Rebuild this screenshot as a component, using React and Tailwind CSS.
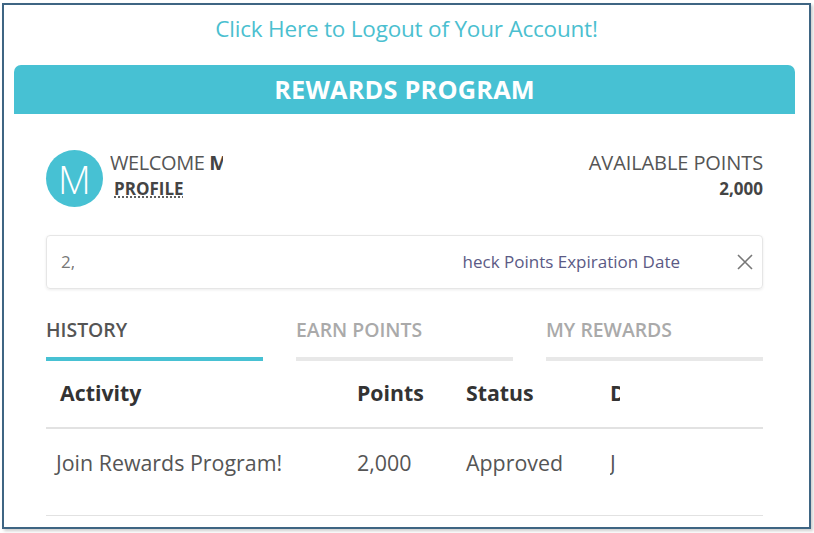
import React from 'react';

const TABS = [
  { label: 'HISTORY', active: true },
  { label: 'EARN POINTS', active: false },
  { label: 'MY REWARDS', active: false },
];

export default function App() {
  return (
    <div className="w-[814px] h-[533px] bg-white pl-[2px] pt-[3px] font-['Open_Sans',sans-serif] overflow-hidden">
      <div className="w-[809px] h-[526px] border-2 border-[#3e6583] bg-white shadow-[2px_2px_3px_rgba(0,0,0,0.2)] overflow-hidden">
        {/* Logout link */}
        <div className="pt-[9px] text-center">
          <a className="text-[22.5px] leading-[30px] text-[#4bbfd0] tracking-[-0.2px]">Click Here to Logout of Your Account!</a>
        </div>

        {/* Header bar */}
        <div className="mt-[21px] ml-[10px] w-[781px] h-[49px] bg-[#47c1d3] rounded-t-[7px] flex items-center justify-center">
          <h1 className="text-white font-bold text-[25.3px] tracking-[0.2px]">REWARDS PROGRAM</h1>
        </div>

        <div className="ml-[42px] w-[717px]">
          {/* Welcome + points */}
          <div className="mt-[36px] flex items-start justify-between">
            <div className="flex items-start">
              <div className="w-[57px] h-[57px] rounded-full bg-[#47c1d3] flex items-center justify-center text-white text-[38px] font-light leading-none">M</div>
              <div className="ml-[7px]">
                <div className="w-[113px] overflow-hidden whitespace-nowrap text-[20px] leading-[26px] text-[#555] tracking-[-0.4px]">
                  WELCOME <span className="font-bold text-[#444]">MEMBER</span>
                </div>
                <a className="ml-[4px] mt-[1px] block text-[17px] leading-[24px] font-bold text-[#444] underline decoration-dotted underline-offset-2">PROFILE</a>
              </div>
            </div>
            <div className="text-right">
              <div className="text-[20px] leading-[26px] text-[#555] tracking-[-0.1px]">AVAILABLE POINTS</div>
              <div className="mt-[1px] text-[17px] leading-[24px] font-bold text-[#444]">2,000</div>
            </div>
          </div>

          {/* Expiration box */}
          <div className="mt-[28px] h-[54px] border border-[#e6e6e6] rounded-[4px] shadow-[0_1px_3px_rgba(0,0,0,0.08)] flex items-center pl-[14px] pr-[7px]">
            <div className="w-[13px] overflow-hidden whitespace-nowrap text-[17px] text-[#777]">2,000 Points</div>
            <div className="flex-1 flex justify-end">
              <div className="w-[218px] overflow-hidden whitespace-nowrap flex justify-end text-[17px] text-[#5b5a85]">Check Points Expiration Date</div>
            </div>
            <button className="ml-[55px] w-[20px] h-[20px] flex items-center justify-center text-[#777]">
              <svg width="18" height="18" viewBox="0 0 18 18" fill="none" stroke="currentColor" strokeWidth="1.6">
                <path d="M2 2 L16 16 M16 2 L2 16" />
              </svg>
            </button>
          </div>

          {/* Tabs */}
          <div className="mt-[28px] flex gap-[33px]">
            {TABS.map(tab => (
              <div key={tab.label} className="w-[217px]">
                <div className={`text-[19.4px] leading-[26px] font-semibold ${tab.active ? 'text-[#555]' : 'text-[#aaa]'}`}>{tab.label}</div>
                <div className={`mt-[14px] h-[4px] ${tab.active ? 'bg-[#47c1d3]' : 'bg-[#e8e8e8]'}`} />
              </div>
            ))}
          </div>

          {/* Table */}
          <div>
            <div className="grid grid-cols-[311px_109px_144px_1fr] h-[68px] items-start pt-[18px] border-b-2 border-[#e2e2e2] text-[21.3px] leading-[28px] font-bold text-[#333]">
              <div className="pl-[14px]">Activity</div>
              <div>Points</div>
              <div>Status</div>
              <div className="w-[10px] overflow-hidden whitespace-nowrap">Date</div>
            </div>
            <div className="grid grid-cols-[311px_109px_144px_1fr] h-[87px] items-start pt-[20px] border-b border-[#e2e2e2] text-[21.4px] leading-[28px] text-[#555]">
              <div className="pl-[10px]">Join Rewards Program!</div>
              <div>2,000</div>
              <div>Approved</div>
              <div className="w-[6px] overflow-hidden whitespace-nowrap">Jan 01</div>
            </div>
          </div>
        </div>
      </div>
    </div>
  );
}
